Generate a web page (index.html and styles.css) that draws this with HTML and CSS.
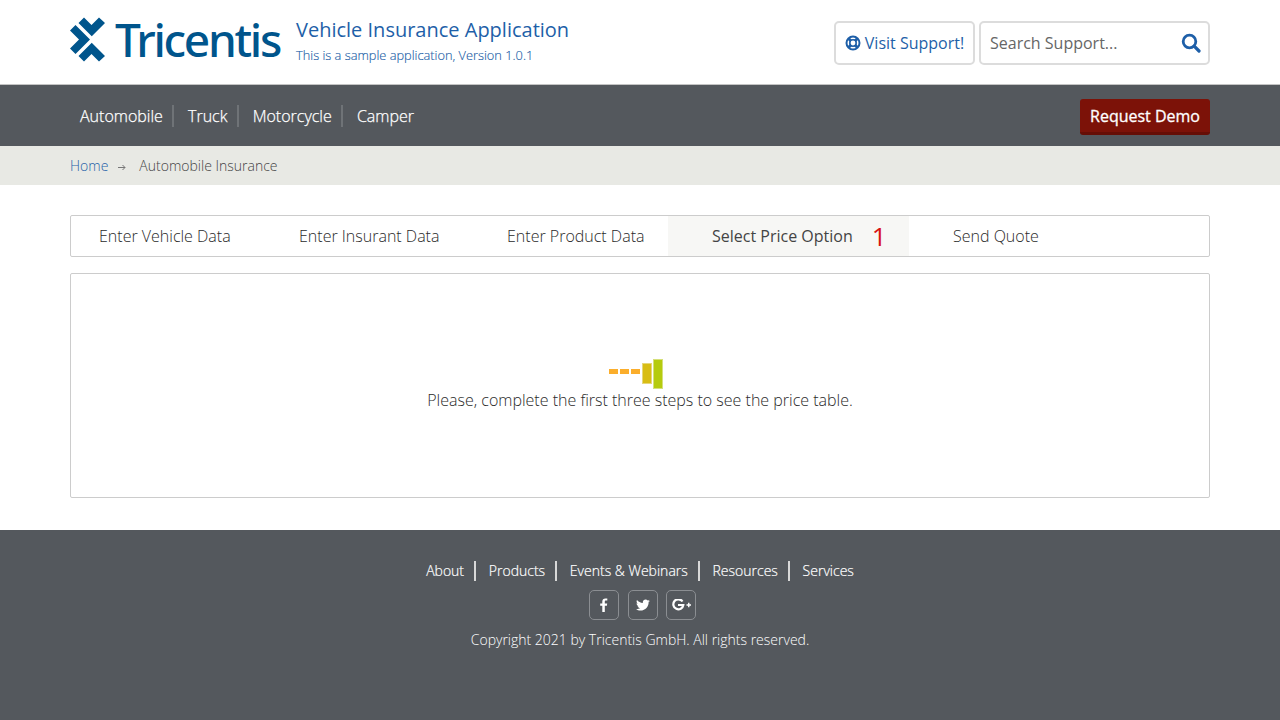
FILE: index.html
```html
<!DOCTYPE html>
<html lang="en">
<head>
<meta charset="utf-8">
<title>Vehicle Insurance Application</title>
<link rel="stylesheet" href="styles.css">
</head>
<body>
<header class="top">
  <div class="wrap top-row">
    <div class="brand">
      <div class="logo">
        <svg class="logo-x" width="36" height="46" viewBox="0 0 36 46"><g fill="#00558c"><path d="M14 .5 L21.500 8 L29 .5 L35 6 L21.750 19.250 L8.500 6 Z"/><path d="M5.500 8 L20 22.500 L5.500 37 L0 31.500 L9 22.500 L0 13.500 Z"/><path d="M14 44.500 L21.500 37 L29 44.500 L35 39 L21.750 25.750 L8.500 39 Z"/></g></svg>
        <span class="logo-word">Tricentis</span>
      </div>
      <div class="brand-text">
        <div class="brand-title">Vehicle Insurance Application</div>
        <div class="brand-sub">This is a sample application, Version 1.0.1</div>
      </div>
    </div>
    <div class="support">
      <a class="support-btn">
        <svg width="16" height="16" viewBox="0 0 16 16" fill="none" stroke="#1e5fa8"><circle cx="8" cy="8" r="6.500" stroke-width="2"/><circle cx="8" cy="8" r="3.200" stroke-width="1.600"/><path d="M3.500 3.500 L5.800 5.800 M12.500 3.500 L10.200 5.800 M3.500 12.500 L5.800 10.200 M12.500 12.500 L10.200 10.200" stroke-width="3"/></svg>
        Visit Support!
      </a>
      <div class="search">
        <span class="search-text">Search Support...</span>
        <svg width="20" height="20" viewBox="0 0 20 20" fill="none" stroke="#1e5fa8"><circle cx="8.500" cy="8.500" r="6.300" stroke-width="2.800"/><path d="M13.200 13.200 L18 18" stroke-width="3.200" stroke-linecap="round"/></svg>
      </div>
    </div>
  </div>
</header>
<nav class="mainnav">
  <div class="wrap nav-row">
    <ul class="nav-links">
      <li>Automobile</li>
      <li>Truck</li>
      <li>Motorcycle</li>
      <li>Camper</li>
    </ul>
    <a class="demo">Request Demo</a>
  </div>
</nav>
<div class="crumbs">
  <div class="wrap crumb-row">
    <a class="crumb-home">Home</a>
    <svg class="crumb-arrow" width="8" height="7" viewBox="0 0 8 7" fill="none" stroke="#777"><path d="M0 3.500 H7 M4.500 1 L7 3.500 L4.500 6"/></svg>
    <span>Automobile Insurance</span>
  </div>
</div>
<main class="wrap content">
  <div class="tabs">
    <div class="tab t1">Enter Vehicle Data</div>
    <div class="tab t2">Enter Insurant Data</div>
    <div class="tab t3">Enter Product Data</div>
    <div class="tab t4 active">Select Price Option <span class="count">1</span></div>
    <div class="tab t5">Send Quote</div>
  </div>
  <section class="panel">
    <div class="loader">
      <i class="dash"></i><i class="dash"></i><i class="dash"></i>
      <i class="bar b1"></i><i class="bar b2"></i>
    </div>
    <p class="msg">Please, complete the first three steps to see the price table.</p>
  </section>
</main>
<footer class="foot">
  <ul class="foot-links">
    <li>About</li>
    <li>Products</li>
    <li>Events &amp; Webinars</li>
    <li>Resources</li>
    <li>Services</li>
  </ul>
  <div class="social">
    <a class="soc">
      <svg width="8" height="14" viewBox="0 0 8 14" fill="#fff"><path d="M2.300 14 V7.800 H0.200 V5.400 H2.300 V3.600 C2.300 1.500 3.500 0.400 5.400 0.400 C6.300 0.400 7 0.500 7.300 0.500 V2.600 H6 C5 2.600 4.800 3.100 4.800 3.800 V5.400 H7.200 L6.900 7.800 H4.800 V14 Z"/></svg>
    </a>
    <a class="soc">
      <svg width="14" height="12" viewBox="0 0 14 12" fill="#fff"><path d="M12.600 3 C12.600 3.100 12.600 3.300 12.600 3.400 C12.600 7.200 9.700 11.500 4.400 11.500 C2.800 11.500 1.300 11 0 10.200 C0.200 10.200 0.500 10.300 0.700 10.300 C2 10.300 3.200 9.800 4.200 9.100 C3 9.100 2 8.300 1.600 7.200 C1.800 7.200 2 7.300 2.200 7.300 C2.400 7.300 2.700 7.200 2.900 7.200 C1.600 6.900 0.600 5.800 0.600 4.400 V4.300 C1 4.500 1.400 4.700 1.900 4.700 C1.100 4.200 0.600 3.300 0.600 2.300 C0.600 1.800 0.700 1.300 1 0.900 C2.400 2.600 4.500 3.800 6.900 3.900 C6.800 3.700 6.800 3.500 6.800 3.300 C6.800 1.700 8.100 0.500 9.600 0.500 C10.400 0.500 11.100 0.800 11.700 1.400 C12.300 1.300 12.900 1 13.500 0.700 C13.300 1.300 12.900 1.900 12.300 2.200 C12.900 2.100 13.400 2 14 1.700 C13.600 2.300 13.100 2.700 12.600 3 Z"/></svg>
    </a>
    <a class="soc">
      <svg width="19" height="12" viewBox="0 0 19 12" fill="none"><path d="M11 3 A5 5 0 1 0 11.800 6.500 H6.500" stroke="#fff" stroke-width="2.200" transform="translate(-0.500 -0.500)"/><path d="M14.500 6 H19 M16.750 3.750 V8.250" stroke="#fff" stroke-width="1.400"/></svg>
    </a>
  </div>
  <p class="copy">Copyright 2021 by Tricentis GmbH. All rights reserved.</p>
</footer>
</body>
</html>
```
FILE: styles.css
```css
* { box-sizing: border-box; }
html, body { margin: 0; padding: 0; }
body { font-family: "Open Sans", sans-serif; font-size: 14px; color: #333; background: #fff; height: 720px; overflow: hidden; display: flex; flex-direction: column; }
ul { list-style: none; margin: 0; padding: 0; }
p { margin: 0; }
.wrap { width: 1140px; margin: 0 auto; }

.top { height: 85px; border-bottom: 1px solid #c4c4c4; flex: none; }
.top-row { display: flex; justify-content: space-between; height: 84px; }
.brand { display: flex; align-items: flex-start; }
.logo { display: flex; align-items: flex-start; padding-top: 17px; width: 226px; }
.logo-x { flex: none; }
.logo-word { font-family: "Noto Sans", sans-serif; font-weight: 550; font-size: 46px; line-height: 44px; letter-spacing: -2.300px; color: #00558c; margin-left: 9px; }
.brand-text { color: #1e5fa8; padding-top: 16px; }
.brand-title { font-size: 20px; line-height: 28px; }
.brand-sub { font-size: 12.800px; font-weight: 300; line-height: 18px; margin-top: 2px; -webkit-text-stroke: .15px #1e5fa8; }

.support { display: flex; gap: 4px; padding-top: 21px; }
.support-btn { height: 44px; width: 141px; border: 2px solid #dcdcdc; border-radius: 5px; color: #1e5fa8; font-size: 16px; display: flex; align-items: center; justify-content: center; gap: 4px; }
.search { height: 44px; width: 231px; border: 2px solid #dcdcdc; border-radius: 5px; display: flex; align-items: center; justify-content: space-between; padding: 0 7px 0 9px; }
.search-text { color: #666; font-size: 16px; }

.mainnav { background: #54585d; height: 61px; flex: none; }
.nav-row { display: flex; justify-content: space-between; align-items: center; height: 61px; }
.nav-links { display: flex; color: #fff; font-size: 16px; font-weight: 300; padding-left: 10px; -webkit-text-stroke: .25px #fff; }
.nav-links li { line-height: 22px; padding-right: 9.200px; margin-right: 14px; border-right: 2px solid #6f7377; }
.nav-links li:last-child { border: 0; }
.demo { background: #7c1208; border-bottom: 3px solid #660e06; border-radius: 3px; height: 36px; width: 130px; color: #fff; font-size: 16px; font-weight: 400; text-align: center; line-height: 34px; margin-top: 2px; -webkit-text-stroke: .3px #fff; }

.crumbs { background: #e8e9e4; height: 39px; flex: none; }
.crumb-row { display: flex; align-items: center; height: 39px; font-size: 14px; color: #444; font-weight: 300; }
.crumb-home { color: #1e5fa8; }
.crumb-arrow { margin: 4px 13px 0 10px; }

.content { flex: none; padding-top: 30px; }
.tabs { height: 42px; border: 1px solid #ccc; border-radius: 2px; display: flex; font-size: 16px; color: #2a2a2a; font-weight: 300; }
.tab { line-height: 40px; white-space: nowrap; }
.t1 { width: 200px; padding-left: 28px; }
.t2 { width: 208px; padding-left: 28px; }
.t3 { width: 189px; padding-left: 28px; }
.t4 { width: 241px; padding-left: 44px; background: #f7f7f5; font-weight: 400; color: #444; display: flex; align-items: center; }
.t5 { padding-left: 44px; }
.count { color: #d81414; font-size: 26px; font-weight: 400; margin-left: 19px; line-height: 40px; }

.panel { margin-top: 16px; height: 225px; border: 1px solid #ccc; border-radius: 2px; display: flex; flex-direction: column; align-items: center; padding-top: 85px; }
.loader { display: flex; align-items: flex-start; height: 30px; width: 54px; margin-left: -8px; }
.dash { width: 9px; height: 5px; background: #fbae2c; margin: 10px 2px 0 0; flex: none; }
.bar { flex: none; }
.b1 { width: 10px; height: 21px; margin: 4px 1px 0 0; background: #d8bd14; border: 1px solid #e6d77a; }
.b2 { width: 10px; height: 30px; background: #b5cb0d; border: 1px solid #d5e07a; }
.msg { font-size: 16px; font-weight: 300; line-height: 22px; margin-top: 0; color: #2a2a2a; }

.foot { margin-top: 32px; background: #54585d; flex: 1; color: #fff; display: flex; flex-direction: column; align-items: center; padding-top: 31px; }
.foot-links { display: flex; font-size: 14px; font-weight: 300; -webkit-text-stroke: .2px #fff; }
.foot-links li { line-height: 20px; padding-right: 10px; margin-right: 12.750px; border-right: 2px solid #d8d8d8; }
.foot-links li:last-child { border: 0; margin: 0; padding: 0; }
.social { display: flex; gap: 8.500px; margin: 9px 0 0 5px; }
.soc { width: 30px; height: 30px; border: 1px solid #8b8e92; border-radius: 5px; display: flex; align-items: center; justify-content: center; }
.copy { font-size: 14px; font-weight: 300; line-height: 20px; margin-top: 10px; color: #fff; }
```
